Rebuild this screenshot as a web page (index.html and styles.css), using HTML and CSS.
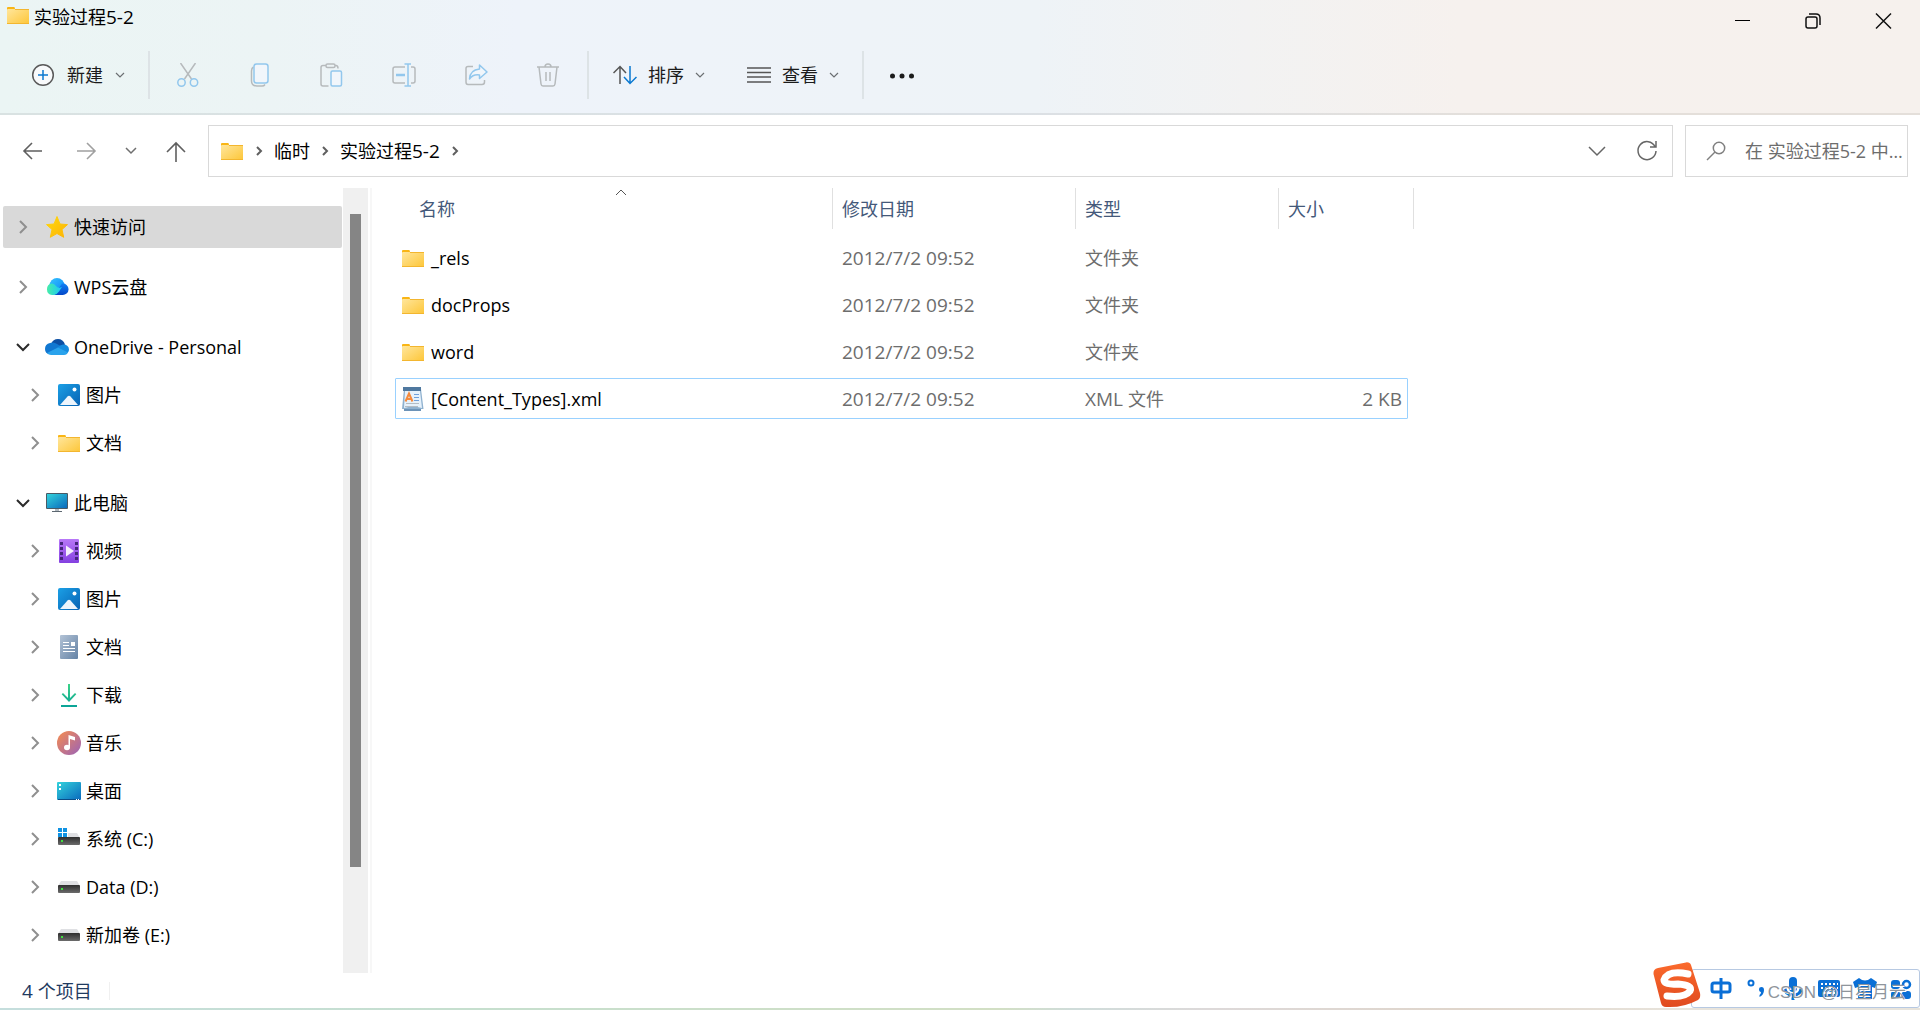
FILE: index.html
```html
<!DOCTYPE html>
<html lang="zh-CN">
<head>
<meta charset="utf-8">
<title>实验过程5-2</title>
<link rel="stylesheet" href="styles.css">
</head>
<body>
<svg class="defs" aria-hidden="true">
  <defs>
    <linearGradient id="g-folder" x1="0" y1="0" x2="1" y2="1"><stop offset="0" stop-color="#ffe69c"/><stop offset="1" stop-color="#fdc638"/></linearGradient>
    <linearGradient id="g-star" x1="0" y1="0" x2="1" y2="1"><stop offset="0" stop-color="#ffd90f"/><stop offset="1" stop-color="#fdb306"/></linearGradient>
    <linearGradient id="g-blue" x1="0" y1="0" x2="1" y2="1"><stop offset="0" stop-color="#1ba0e6"/><stop offset="1" stop-color="#0762b3"/></linearGradient>
    <linearGradient id="g-screen" x1="0" y1="0" x2="1" y2="1"><stop offset="0" stop-color="#33d3dc"/><stop offset="1" stop-color="#0a69bd"/></linearGradient>
    <linearGradient id="g-video" x1="0" y1="0" x2="0" y2="1"><stop offset="0" stop-color="#b878f8"/><stop offset="1" stop-color="#8440e0"/></linearGradient>
    <linearGradient id="g-doc" x1="0" y1="0" x2="1" y2="1"><stop offset="0" stop-color="#b3c3d6"/><stop offset="1" stop-color="#6482a5"/></linearGradient>
    <linearGradient id="g-down" x1="0" y1="0" x2="0" y2="1"><stop offset="0" stop-color="#3bd387"/><stop offset="1" stop-color="#0aa398"/></linearGradient>
    <linearGradient id="g-music" x1="0" y1="0" x2="1" y2="1"><stop offset="0" stop-color="#f78d4e"/><stop offset="1" stop-color="#9a62b8"/></linearGradient>
    <linearGradient id="g-drive" x1="0" y1="0" x2="0" y2="1"><stop offset="0" stop-color="#2e2e2e"/><stop offset="1" stop-color="#6b6b6b"/></linearGradient>
    <linearGradient id="g-wps" x1="0" y1="0" x2="1" y2="0"><stop offset="0" stop-color="#47eda8"/><stop offset="1" stop-color="#18c6fb"/></linearGradient>
    <linearGradient id="g-wps-top" x1="0" y1="0" x2="1" y2="1"><stop offset="0" stop-color="#35c3ff"/><stop offset="1" stop-color="#0a84f5"/></linearGradient>
    <linearGradient id="g-wps-right" x1="0" y1="0" x2="0" y2="1"><stop offset="0" stop-color="#1080f5"/><stop offset="1" stop-color="#0447c8"/></linearGradient>
    <linearGradient id="g-logo" x1="0" y1="0" x2="0" y2="1"><stop offset="0" stop-color="#fb6a2c"/><stop offset="1" stop-color="#e04a1f"/></linearGradient>
  </defs>
  <symbol id="folder" viewBox="0 0 24 24"><path fill="#f9b515" d="M1 5Q1 4 2 4H8Q9 4 9 6L10 7H1Z"/><rect x="1" y="6" width="22" height="15" rx="1" fill="url(#g-folder)"/><path stroke="#f3b62f" d="M9 6.500H23M1 20.500H23"/></symbol>
  <symbol id="star" viewBox="0 0 24 24"><path fill="url(#g-star)" stroke="url(#g-star)" stroke-width="1" stroke-linejoin="round" d="M12 1.500L15 9L22.500 9.600L17 14.500L18.700 22.300L12 18.500L5.300 22.300L7 14.500L1.500 9.600L9 9Z"/></symbol>
  <symbol id="wps" viewBox="0 0 24 24"><circle cx="12" cy="10.500" r="7.500" fill="url(#g-wps-top)"/><path fill="url(#g-wps-right)" d="M9 20L17 8.500A5.800 5.800 0 1 1 17 20Z"/><path fill="url(#g-wps)" d="M7 8.500A5.800 5.800 0 0 0 7 20H9Q12 19.500 14 16.500L17 12Q13 14 11 11Q9.500 8.500 7 8.500Z"/></symbol>
  <symbol id="onedrive" viewBox="0 0 24 24"><path fill="#0c4fa4" d="M6 9Q8 4 13 4Q18 4 20 9.500L14 14Z"/><path fill="#1177d1" d="M5 8Q9 6.500 12 9L19 13L5 19Q0 19 0 14Q0 9 5 8Z"/><path fill="#148bdf" d="M18 9.500Q24 9.500 24 15Q23 20 18 19L12 13Q15 9.500 18 9.500Z"/><path fill="#2aa3ec" d="M2 18L13 12.500L23 17.500Q21.500 20 19 20H6Q3.500 20 2 18Z"/></symbol>
  <symbol id="picture" viewBox="0 0 24 24"><rect x="1" y="1" width="22" height="22" rx="2" fill="url(#g-blue)"/><circle cx="17.500" cy="6.500" r="2" fill="#fff"/><path fill="#edf5fc" d="M3 22L10.500 13.600Q12 12 13.500 13.600L21 22Z"/></symbol>
  <symbol id="computer" viewBox="0 0 24 24"><rect x="1" y="2" width="22" height="16" rx="1" fill="#495a66"/><rect x="2" y="3" width="20" height="14" fill="url(#g-screen)"/><path fill="#b3bac0" d="M10 18H14V20H10Z"/><path fill="#5c6770" d="M7 20H17V21H7Z"/></symbol>
  <symbol id="video" viewBox="0 0 24 24"><rect x="2" y="0" width="20" height="24" rx="1" fill="url(#g-video)"/><path fill="#46267d" d="M3 3h3v3H3zM3 8h3v3H3zM3 13h3v3H3zM3 18h3v3H3zM18 3h3v3h-3zM18 8h3v3h-3zM18 13h3v3h-3zM18 18h3v3h-3z"/><path fill="#f5effc" d="M9 6.500L17 12L9 17.500Z"/></symbol>
  <symbol id="document" viewBox="0 0 24 24"><rect x="3" y="0" width="18" height="24" rx="1" fill="url(#g-doc)"/><path fill="#fff" d="M14 7h4v4h-4z"/><path fill="none" stroke="#fff" stroke-width="1" d="M6 7.500H12M6 10.500H12M6 13.500H18M6 16.500H18"/></symbol>
  <symbol id="download" viewBox="0 0 24 24"><path fill="url(#g-down)" d="M11 1h2v14l5-5 1.300 1.300L12 19l-7.300-7.700L6 10l5 5zM4 22h16v2H4z"/></symbol>
  <symbol id="music" viewBox="0 0 24 24"><circle cx="12" cy="12" r="12" fill="url(#g-music)"/><ellipse cx="10" cy="16.500" rx="3" ry="2.700" fill="#fff"/><path fill="#fff" d="M11.500 4L18 6V9.500L13 8V17H11.500Z"/></symbol>
  <symbol id="desktop" viewBox="0 0 24 24"><rect x="0" y="3" width="24" height="18" rx="1" fill="url(#g-screen)"/><path fill="#0b4c86" d="M1 20H23V21H1Z"/><path fill="#fff" d="M2 5h2v2H2zM2 9h2v2H2zM19 20h1v1h-1zM21 20h1v1h-1z"/></symbol>
  <symbol id="drive" viewBox="0 0 24 24"><path fill="#dfe0e3" d="M4 6H20L23 11H1Z"/><rect x="1" y="10" width="22" height="8" rx="1" fill="url(#g-drive)"/><path fill="#3fe03f" d="M4 13h2v2H4z"/></symbol>
  <symbol id="system" viewBox="0 0 24 24"><path fill="#dfe0e3" d="M4 6H20L23 11H1Z"/><rect x="1" y="10" width="22" height="8" rx="1" fill="url(#g-drive)"/><path fill="#3fe03f" d="M4 13h2v2H4z"/><path fill="#fff" d="M0 0h11v10H0z"/><path fill="#0f92e3" d="M1 1h4v4H1zM6 1h4v4H6zM1 6h4v4H1zM6 6h4v4H6z"/></symbol>
  <symbol id="xml" viewBox="0 0 24 24"><path fill="#6c93b8" d="M3 20h17v4H3z"/><path fill="#8fb1cf" d="M3 2H20L22.500 22H1Z"/><path fill="#e6f1fb" d="M4 4H19L21 21Q12 18 3 21Z"/><path fill="#4f789f" d="M2 0h18v4H2z"/><path fill="none" stroke="#f58a3c" stroke-width="2" d="M4.500 14.500L8 6.500L11.500 14.500M6 12H10.500"/><path stroke="#6f9fda" d="M13 7.500H18M13 10.500H18M13 13.500H18"/><path stroke="#b4bcc4" d="M5 16.500H18M4 19.500H17"/></symbol>
  <symbol id="right" viewBox="0 0 16 16"><path fill="none" stroke="#8f8f8f" stroke-width="2" d="M5 2L11 8L5 14"/></symbol>
  <symbol id="down" viewBox="0 0 16 16"><path fill="none" stroke="#2b2b2b" stroke-width="2" d="M2 5L8 11L14 5"/></symbol>
  <symbol id="small-down" viewBox="0 0 10 10"><path fill="none" stroke="#6b6f72" stroke-width="1.200" d="M1 3L5 7L9 3"/></symbol>
  <symbol id="crumb" viewBox="0 0 10 10"><path fill="none" stroke="#5f5f5f" stroke-width="2" d="M3 1L7 5L3 9"/></symbol>
</svg>

<header class="top">
  <div class="titlebar">
    <svg class="icon"><use href="#folder"/></svg>
    <h1 class="title">实验过程<span class="digits">5-2</span></h1>
    <div class="window-buttons">
      <button aria-label="最小化"><svg class="glyph" viewBox="0 0 24 24"><path d="M4 11.500H19" stroke="#000"/></svg></button>
      <button aria-label="还原"><svg class="glyph" viewBox="0 0 24 24" fill="none" stroke="#111" stroke-width="1.500"><rect x="5" y="8" width="11" height="11" rx="2"/><path d="M8 5H15Q19 5 19 9V16"/></svg></button>
      <button aria-label="关闭"><svg class="glyph" viewBox="0 0 24 24"><path d="M5 4.500L20 19.500M20 4.500L5 19.500" stroke="#111" stroke-width="1.500"/></svg></button>
    </div>
  </div>
  <div class="toolbar">
    <button class="command new"><svg class="glyph" viewBox="0 0 24 24" fill="none"><circle cx="12" cy="12" r="10.300" fill="#f8fafb" stroke="#5a5a5a" stroke-width="1.500"/><path d="M12 7V17M7 12H17" stroke="#0a78d0" stroke-width="1.500"/></svg>新建<svg class="tiny"><use href="#small-down"/></svg></button>
    <div class="group">
      <button aria-label="剪切"><svg class="glyph" viewBox="0 0 24 24" fill="none" stroke-width="1.500"><path stroke="#b6babc" d="M4.500 0L15.500 16M19.500 0L8.500 16"/><circle cx="5.500" cy="19.500" r="3.700" stroke="#92c7ed"/><circle cx="18" cy="19.500" r="3.700" stroke="#92c7ed"/></svg></button>
      <button aria-label="复制"><svg class="glyph" viewBox="0 0 24 24" fill="none" stroke-width="1.500"><path stroke="#b6babc" d="M5.500 4Q3.500 5 3.500 8V18Q3.500 23 9 23H14Q16 23 17 21.500"/><rect x="6" y="1" width="14" height="19" rx="2.500" fill="#f1f6fb" stroke="#92c7ed"/></svg></button>
      <button aria-label="粘贴"><svg class="glyph" viewBox="0 0 24 24" fill="none" stroke-width="1.500"><path stroke="#b6babc" d="M6 2.500H3Q1 2.500 1 4.500V21Q1 23 3 23H8.500M15 2.500H16Q18 2.500 18 5.500"/><rect x="6" y="1" width="9" height="3.500" rx="1.500" stroke="#b6babc"/><rect x="11" y="8" width="10.500" height="15" rx="1.500" fill="#f1f6fb" stroke="#92c7ed"/></svg></button>
      <button aria-label="重命名"><svg class="glyph" viewBox="0 0 24 24" fill="none" stroke-width="1.500"><path stroke="#b6babc" d="M13 4H3Q1 4 1 6V18Q1 20 3 20H13M19 4H21Q23 4 23 6V18Q23 20 21 20H19"/><path stroke="#92c7ed" d="M12.500 1H19M12.500 23H19M16 1V23"/><path stroke="#92c7ed" stroke-width="2.500" d="M4 12H13"/></svg></button>
      <button aria-label="共享"><svg class="glyph" viewBox="0 0 24 24" fill="none" stroke-width="1.500"><path stroke="#b6babc" d="M9 3.500H4Q2 3.500 2 5.500V19Q2 21.500 4 21.500H18Q20.500 21.500 20.500 19V17"/><path stroke="#92c7ed" fill="#f1f6fb" stroke-linejoin="round" d="M15.500 2L23 9L15.500 15.500V12Q9 11 5.500 16Q6 7 15.500 6Z"/></svg></button>
      <button aria-label="删除"><svg class="glyph" viewBox="0 0 24 24" fill="none" stroke="#b6babc" stroke-width="1.500"><path d="M1 4H23M3 4L5 21Q5.300 23 7 23H17Q18.700 23 19 21L21 4M9 4Q9 1 12 1Q15 1 15 4M10 9V18M14 9V18"/></svg></button>
    </div>
    <button class="command"><svg class="glyph" viewBox="0 0 24 24" fill="none" stroke-width="1.500"><path stroke="#555" d="M7 21V4M.500 10L7 3.500L13 10"/><path stroke="#0a78d0" d="M17 3V20M11 14L17 20.500L23.500 14"/></svg>排序<svg class="tiny"><use href="#small-down"/></svg></button>
    <button class="command"><svg class="glyph" viewBox="0 0 24 24"><path stroke="#555" stroke-width="1.500" d="M0 5H24M0 9.500H24M0 14H24M0 19H24"/></svg>查看<svg class="tiny"><use href="#small-down"/></svg></button>
    <button class="more" aria-label="更多"><svg class="glyph" viewBox="0 0 24 24" fill="#1b1b1b"><circle cx="2.500" cy="13" r="2.500"/><circle cx="12" cy="13" r="2.500"/><circle cx="21.500" cy="13" r="2.500"/></svg></button>
  </div>
</header>

<nav class="address-row" aria-label="导航">
  <div class="history">
    <button aria-label="后退"><svg class="glyph" viewBox="0 0 24 24" fill="none" stroke="#5f5f5f" stroke-width="1.600"><path d="M3 12H21M11 4L3 12L11 20"/></svg></button>
    <button aria-label="前进"><svg class="glyph" viewBox="0 0 24 24" fill="none" stroke="#a0a0a0" stroke-width="1.600"><path d="M3 12H21M13 4L21 12L13 20"/></svg></button>
    <button class="recent" aria-label="最近位置"><svg class="glyph" viewBox="0 0 24 24" fill="none" stroke="#6f6f6f" stroke-width="1.500"><path d="M7 9L12 14L17 9"/></svg></button>
    <button aria-label="向上"><svg class="glyph" viewBox="0 0 24 24" fill="none" stroke="#5f5f5f" stroke-width="1.600"><path d="M12 23V4M3 13L12 4L21 13"/></svg></button>
  </div>
  <div class="address">
    <svg class="icon"><use href="#folder"/></svg>
    <svg class="tiny"><use href="#crumb"/></svg>
    <a href="#">临时</a>
    <svg class="tiny"><use href="#crumb"/></svg>
    <a href="#">实验过程<span class="digits">5-2</span></a>
    <svg class="tiny"><use href="#crumb"/></svg>
    <div class="address-tools">
      <button aria-label="以前的位置"><svg class="glyph" viewBox="0 0 24 24" fill="none" stroke="#666" stroke-width="1.500"><path d="M4 8L12 16L20 8"/></svg></button>
      <button aria-label="刷新"><svg class="glyph" viewBox="0 0 24 24" fill="none" stroke="#666" stroke-width="1.500"><path d="M20 7.500A9 9 0 1 0 21 12M21 2V8H15"/></svg></button>
    </div>
  </div>
  <label class="search"><svg class="glyph" viewBox="0 0 24 24" fill="none" stroke="#808080" stroke-width="1.500"><circle cx="15" cy="9" r="5.700"/><path d="M11 13L3 21"/></svg><input type="text" aria-label="搜索" placeholder="在 实验过程5-2 中搜索"></label>
</nav>

<main class="content">
  <aside class="sidebar">
    <ul class="tree">
      <li class="root selected"><svg class="twist"><use href="#right"/></svg><svg class="icon"><use href="#star"/></svg><a href="#">快速访问</a></li>
      <li class="root"><svg class="twist"><use href="#right"/></svg><svg class="icon"><use href="#wps"/></svg><a href="#">WPS云盘</a></li>
      <li class="root"><svg class="twist"><use href="#down"/></svg><svg class="icon"><use href="#onedrive"/></svg><a href="#">OneDrive - Personal</a></li>
      <li><svg class="twist"><use href="#right"/></svg><svg class="icon"><use href="#picture"/></svg><a href="#">图片</a></li>
      <li><svg class="twist"><use href="#right"/></svg><svg class="icon"><use href="#folder"/></svg><a href="#">文档</a></li>
      <li class="root"><svg class="twist"><use href="#down"/></svg><svg class="icon"><use href="#computer"/></svg><a href="#">此电脑</a></li>
      <li><svg class="twist"><use href="#right"/></svg><svg class="icon"><use href="#video"/></svg><a href="#">视频</a></li>
      <li><svg class="twist"><use href="#right"/></svg><svg class="icon"><use href="#picture"/></svg><a href="#">图片</a></li>
      <li><svg class="twist"><use href="#right"/></svg><svg class="icon"><use href="#document"/></svg><a href="#">文档</a></li>
      <li><svg class="twist"><use href="#right"/></svg><svg class="icon"><use href="#download"/></svg><a href="#">下载</a></li>
      <li><svg class="twist"><use href="#right"/></svg><svg class="icon"><use href="#music"/></svg><a href="#">音乐</a></li>
      <li><svg class="twist"><use href="#right"/></svg><svg class="icon"><use href="#desktop"/></svg><a href="#">桌面</a></li>
      <li><svg class="twist"><use href="#right"/></svg><svg class="icon"><use href="#system"/></svg><a href="#">系统 (C:)</a></li>
      <li><svg class="twist"><use href="#right"/></svg><svg class="icon"><use href="#drive"/></svg><a href="#">Data (D:)</a></li>
      <li><svg class="twist"><use href="#right"/></svg><svg class="icon"><use href="#drive"/></svg><a href="#">新加卷 (E:)</a></li>
    </ul>
    <div class="scroll-track"><div class="scroll-thumb"></div></div>
  </aside>
  <section class="files">
    <table>
      <colgroup><col class="c-name"><col class="c-date"><col class="c-type"><col class="c-size"></colgroup>
      <thead>
        <tr><th class="sorted" aria-sort="ascending">名称<svg class="sort" viewBox="0 0 12 8"><path fill="none" stroke="#555" d="M1 7L6 2L11 7"/></svg></th><th>修改日期</th><th>类型</th><th>大小</th></tr>
      </thead>
      <tbody>
        <tr><td><a href="#"><svg class="icon"><use href="#folder"/></svg>_rels</a></td><td class="digits">2012/7/2 09:52</td><td>文件夹</td><td></td></tr>
        <tr><td><a href="#"><svg class="icon"><use href="#folder"/></svg>docProps</a></td><td class="digits">2012/7/2 09:52</td><td>文件夹</td><td></td></tr>
        <tr><td><a href="#"><svg class="icon"><use href="#folder"/></svg>word</a></td><td class="digits">2012/7/2 09:52</td><td>文件夹</td><td></td></tr>
        <tr class="focused"><td><a href="#"><svg class="icon"><use href="#xml"/></svg>[Content_Types].xml</a></td><td class="digits">2012/7/2 09:52</td><td><span class="digits">XML </span>文件</td><td class="digits">2 KB</td></tr>
      </tbody>
    </table>
  </section>
</main>

<footer class="status"><span class="count"><span class="digits">4 </span>个项目</span></footer>

<div class="ime">
  <svg class="ime-logo" viewBox="0 0 48 46"><path fill="url(#g-logo)" d="M5 6L33 .400Q37 0 38 3L47 31Q48 36 45 38Q30 46 13 45Q9 45 8 41L.500 12Q0 7 5 6Z"/><path fill="none" stroke="#fff" stroke-width="7" stroke-linecap="round" d="M35 12Q15 8 11 18Q11 23 25 22Q40 23 37 29Q32 36 14 34"/></svg>
  <div class="ime-bar">
    <svg class="glyph" viewBox="0 0 24 24" fill="none" stroke="#0a6fd6" stroke-width="3"><rect x="3" y="6" width="18" height="9" rx="2"/><path d="M12 1V22"/></svg>
    <svg class="glyph" viewBox="0 0 24 24"><circle cx="6" cy="6" r="2.500" fill="none" stroke="#0a6fd6" stroke-width="2"/><path fill="#0a6fd6" d="M14 12Q14 10 16.500 10Q19 10 19 13Q19 18 14.500 20V18Q16 17 16 15Q14 15 14 12Z"/></svg>
    <svg class="glyph" viewBox="0 0 24 24"><rect x="8" y="0" width="8" height="15" rx="4" fill="#0a6fd6"/><path fill="none" stroke="#0a6fd6" stroke-width="3" d="M4 11Q4 18 12 18Q20 18 20 11M12 18V23"/></svg>
    <svg class="glyph" viewBox="0 0 24 24"><rect x="1" y="3" width="22" height="17" rx="2" fill="#0a6fd6"/><path stroke="#fff" stroke-width="2" stroke-dasharray="2 2" d="M4 7H21M4 11H21"/><path stroke="#fff" stroke-width="2" d="M6 16H18"/></svg>
    <svg class="glyph" viewBox="0 0 24 24"><path fill="#0a6fd6" d="M6 1Q12 6 18 1L24 5L22 11L19 10V22H5V10L2 11L0 5Z"/></svg>
    <svg class="glyph" viewBox="0 0 24 24" fill="#0a6fd6"><rect x="2" y="3" width="9" height="9" rx="3"/><circle cx="17.500" cy="7.500" r="3.500" fill="none" stroke="#0a6fd6" stroke-width="2.500"/><rect x="2" y="14" width="9" height="8" rx="3"/><rect x="13" y="14" width="9" height="8" rx="3"/></svg>
  </div>
  <span class="watermark">CSDN @日星月云</span>
</div>
</body>
</html>
```

FILE: styles.css
```css
* {
  box-sizing: border-box;
}

body {
  margin: 0;
  min-height: 100vh;
  display: flex;
  flex-direction: column;
  position: relative;
  background: #fff;
  color: #000;
  font: 18px/24px "Open Sans", "Noto Sans CJK SC", sans-serif;
}

.digits {
  font-size: 19px;
}

.defs {
  position: absolute;
  width: 0;
  height: 0;
}

svg {
  flex: none;
  display: block;
}

.icon,
.glyph {
  width: 24px;
  height: 24px;
}

.tiny {
  width: 10px;
  height: 10px;
}

button {
  display: flex;
  align-items: center;
  justify-content: center;
  padding: 0;
  border: 0;
  background: none;
  color: #1b1b1b;
  font: inherit;
}

a {
  color: inherit;
  text-decoration: none;
  white-space: nowrap;
}

/* Title bar and commands */
.top {
  background: linear-gradient(90deg, #ebf5f4 0%, #ecf4f5 14%, #eef3fa 27%, #eef3f7 54%, #f2f2f2 65%, #f6f1ee 76%, #f6f1ed 100%);
  border-bottom: 2px solid;
  border-image: linear-gradient(90deg, #d9e2e2, #dbe0e5 52%, #e4dfda 80%) 1;
}

.titlebar {
  display: flex;
  align-items: flex-start;
  height: 36px;
  padding: 0 2px 0 6px;
}

.titlebar > .icon {
  margin-top: 3px;
}

.title {
  flex: 1;
  margin: 5px 0 0 4px;
  font-size: 18px;
  font-weight: 400;
}

.window-buttons {
  display: flex;
}

.window-buttons button {
  width: 70px;
  height: 42px;
}

.toolbar {
  display: flex;
  align-items: center;
  height: 77px;
  padding-left: 8px;
}

.command {
  height: 48px;
  gap: 11px;
  padding-left: 24px;
  margin-right: 18px;
}

.command.new {
  gap: 12px;
  margin-right: 0;
  padding: 0 23px;
}

.group {
  display: flex;
  height: 48px;
  padding: 0 3px 0 2px;
  border: solid #dde3e6;
  border-width: 0 2px;
}

.group button {
  width: 72px;
}

.more {
  width: 78px;
  height: 48px;
  margin-left: 5px;
  border-left: 2px solid #dde3e6;
}

/* Address row */
.address-row {
  display: flex;
  padding: 10px 12px 0 0;
}

.history {
  display: flex;
  align-items: center;
  width: 208px;
  padding-left: 21px;
  gap: 29px;
}

.history .recent {
  margin: 0 -8px;
}

.address,
.search {
  display: flex;
  align-items: center;
  height: 52px;
  border: 1px solid #d9d9d9;
}

.address {
  flex: 1;
  gap: 10px;
  padding: 0 13px 0 11px;
}

.address-tools {
  display: flex;
  gap: 26px;
  margin-left: auto;
}

.search {
  width: 223px;
  margin-left: 12px;
  padding-left: 18px;
}

.search input {
  flex: 1;
  min-width: 0;
  margin-left: 17px;
  padding: 0;
  border: 0;
  outline: 0;
  background: none;
  font: inherit;
  text-overflow: ellipsis;
}

.search input::placeholder {
  color: #6d6d6d;
  opacity: 1;
}

/* Main area */
.content {
  flex: 1;
  display: flex;
  padding-top: 11px;
}

.sidebar {
  display: flex;
  width: 372px;
  border-right: 2px solid #f7f7f7;
}

.tree {
  flex: 1;
  margin: 0;
  padding: 18px 1px 0 3px;
  list-style: none;
}

.tree li {
  display: flex;
  align-items: center;
  height: 42px;
  margin-top: 6px;
  padding-left: 24px;
}

.tree .root {
  margin-top: 18px;
  padding-left: 12px;
}

.tree .selected {
  margin-top: 0;
  border-radius: 2px;
  background: #d9d9d9;
}

.twist {
  width: 16px;
  height: 16px;
}

.tree .icon {
  margin: 0 5px 0 14px;
}

.scroll-track {
  width: 25px;
  margin-right: 2px;
  padding: 26px 7px 106px;
  background: #f0f0f0;
}

.scroll-thumb {
  width: 11px;
  height: 100%;
  background: #858585;
}

.files {
  flex: 1;
  padding-left: 23px;
}

table {
  width: 1019px;
  table-layout: fixed;
  border-collapse: separate;
  border-spacing: 0;
}

.c-name { width: 438px; }
.c-date { width: 243px; }
.c-type { width: 203px; }

th {
  position: relative;
  height: 41px;
  padding: 0 0 0 9px;
  border-right: 1px solid #e0e0e0;
  color: #44597a;
  font-weight: 400;
  text-align: left;
}

th.sorted {
  padding-left: 24px;
}

.sort {
  position: absolute;
  top: 0;
  right: 205px;
  width: 12px;
  height: 8px;
}

tbody {
  color: #6d6d6d;
}

tbody::before {
  content: "";
  display: table-row;
  height: 5px;
}

td {
  height: 47px;
  padding: 0 0 0 9px;
}

td:first-child {
  padding-left: 6px;
  color: #000;
}

td:last-child {
  padding-right: 12px;
  text-align: right;
}

td a {
  display: flex;
  align-items: center;
  gap: 6px;
}

.focused {
  position: relative;
}

.focused td:first-child::before {
  content: "";
  position: absolute;
  inset: 3px 6px 3px 0;
  border: 1px solid #99d1ff;
  border-radius: 1px;
}

/* Status bar */
.status {
  display: flex;
  align-items: center;
  height: 37px;
  padding-left: 22px;
  border-bottom: 2px solid;
  border-image: linear-gradient(90deg, #c5dedd, #c6dfce 25%, #d2dfc4 52%, #cfdcda 56%, #ddd9d9 63%, #dfd5cb 76%, #e8e4dc 88%) 1;
  color: #1f3a5f;
}

.count {
  padding-right: 17px;
  border-right: 1px solid #f0f0f0;
  line-height: 18px;
}

/* Floating input-method bar */
.ime {
  position: absolute;
  right: 0;
  bottom: 2px;
  width: 267px;
}

.ime-logo {
  position: absolute;
  bottom: 0;
  left: 0;
  width: 48px;
  height: 46px;
}

.ime-bar {
  display: flex;
  align-items: center;
  justify-content: space-between;
  height: 39px;
  margin-left: 38px;
  padding: 0 6px 0 17px;
  border: 1px solid #b7c9e2;
  border-radius: 3px;
  background: #fff;
}

.watermark {
  position: absolute;
  right: 14px;
  bottom: 3px;
  color: #8f959c;
  font: 17px/24px "Liberation Sans", "Noto Sans CJK SC", sans-serif;
  text-shadow: 1px 1px #fff;
  white-space: nowrap;
}
```
